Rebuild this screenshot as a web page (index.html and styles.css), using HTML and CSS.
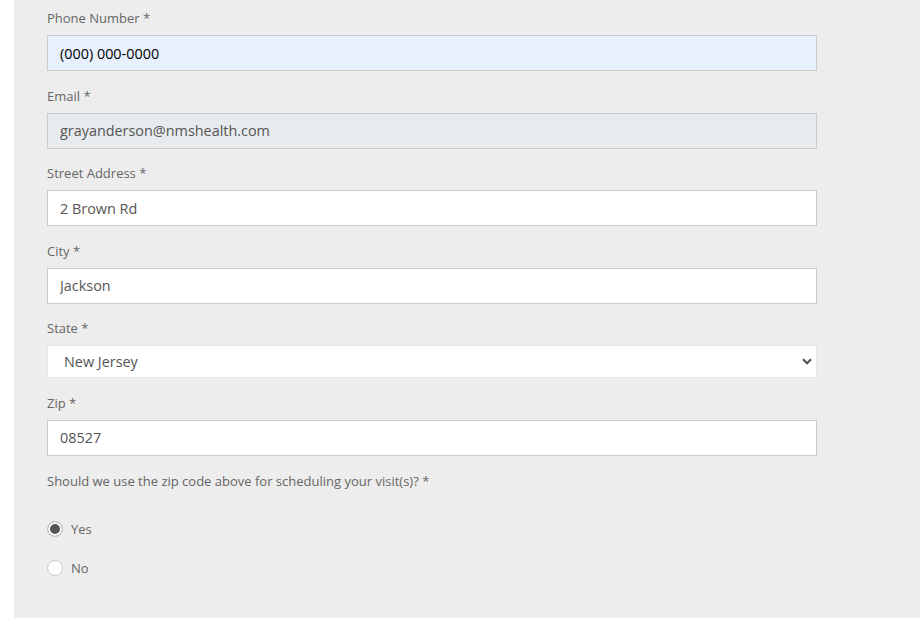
FILE: index.html
```html
<!DOCTYPE html>
<html lang="en">
<head>
    <meta charset="UTF-8">
    <meta name="viewport" content="width=device-width, initial-scale=1.0">
    <title>Patient Information</title>
    <link rel="stylesheet" href="styles.css">
</head>
<body>

<div class="form-panel">
    <div class="field">
        <label class="field-label" for="phone">Phone Number *</label>
        <input class="field-input autofilled" id="phone" type="text" value="(000) 000-0000">
    </div>

    <div class="field">
        <label class="field-label" for="email">Email *</label>
        <input class="field-input readonly" id="email" type="text" value="grayanderson@nmshealth.com" readonly>
    </div>

    <div class="field">
        <label class="field-label" for="street">Street Address *</label>
        <input class="field-input" id="street" type="text" value="2 Brown Rd">
    </div>

    <div class="field">
        <label class="field-label" for="city">City *</label>
        <input class="field-input" id="city" type="text" value="Jackson">
    </div>

    <div class="field">
        <label class="field-label" for="state">State *</label>
        <div class="select-wrap">
            <select class="field-select" id="state">
                <option>New York</option>
                <option selected>New Jersey</option>
                <option>Pennsylvania</option>
            </select>
            <svg class="select-arrow" width="10" height="7" viewBox="0 0 10 7">
                <path d="M1 1.2 L5 5.2 L9 1.2" fill="none" stroke="#555" stroke-width="2.2"/>
            </svg>
        </div>
    </div>

    <div class="field">
        <label class="field-label" for="zip">Zip *</label>
        <input class="field-input" id="zip" type="text" value="08527">
    </div>

    <p class="question">Should we use the zip code above for scheduling your visit(s)? *</p>

    <div class="radio-group">
        <label class="radio-row">
            <input type="radio" name="usezip" checked>
            <span>Yes</span>
        </label>
        <label class="radio-row">
            <input type="radio" name="usezip">
            <span>No</span>
        </label>
    </div>
</div>

</body>
</html>
```
FILE: styles.css
```css
/* Estilos gerais */
body {
    margin: 0;
    background-color: #fff;
    font-family: "Open Sans", Arial, sans-serif;
    color: #555;
}

.form-panel {
    margin-left: 14px;
    height: 618px;
    box-sizing: border-box;
    background-color: #ededed;
    padding: 9px 0 0 33px;
}

.field {
    margin-bottom: 15.5px;
}

.field-label {
    display: block;
    font-size: 13px;
    line-height: 18px;
    color: #666;
    margin-bottom: 8px;
}

.field-input {
    display: block;
    box-sizing: border-box;
    width: 770px;
    height: 36px;
    margin: 0;
    padding: 0 12px;
    border: 1px solid #ccc;
    background-color: #fff;
    font-family: "Open Sans", Arial, sans-serif;
    font-size: 14.4px;
    color: #555;
    outline: none;
}

.field-input.autofilled {
    background-color: #e8f0fe;
    color: #000;
}

.field-input.readonly {
    background-color: #e8ebee;
}

.select-wrap {
    position: relative;
    width: 770px;
}

.field-select {
    display: block;
    box-sizing: border-box;
    width: 770px;
    height: 33px;
    margin: 0;
    padding: 0 16px;
    border: 1px solid #e6e6e6;
    background-color: #fff;
    font-family: "Open Sans", Arial, sans-serif;
    font-size: 14.4px;
    color: #555;
    appearance: none;
    -webkit-appearance: none;
    outline: none;
}

.select-arrow {
    position: absolute;
    right: 5px;
    top: 13px;
    pointer-events: none;
}

.question {
    margin: 0;
    padding-top: 1px;
    font-size: 13px;
    line-height: 18px;
    color: #666;
}

.radio-group {
    margin-top: 29px;
}

.radio-row {
    display: flex;
    align-items: center;
    gap: 8px;
    height: 20px;
    margin-bottom: 19px;
    font-size: 13px;
    color: #666;
}

.radio-row input {
    appearance: none;
    -webkit-appearance: none;
    width: 16px;
    height: 16px;
    margin: 0;
    border: 1px solid #ccc;
    border-radius: 50%;
    background-color: #fff;
}

.radio-row input:checked {
    background-color: #555;
    box-shadow: inset 0 0 0 2px #fff;
}
```
